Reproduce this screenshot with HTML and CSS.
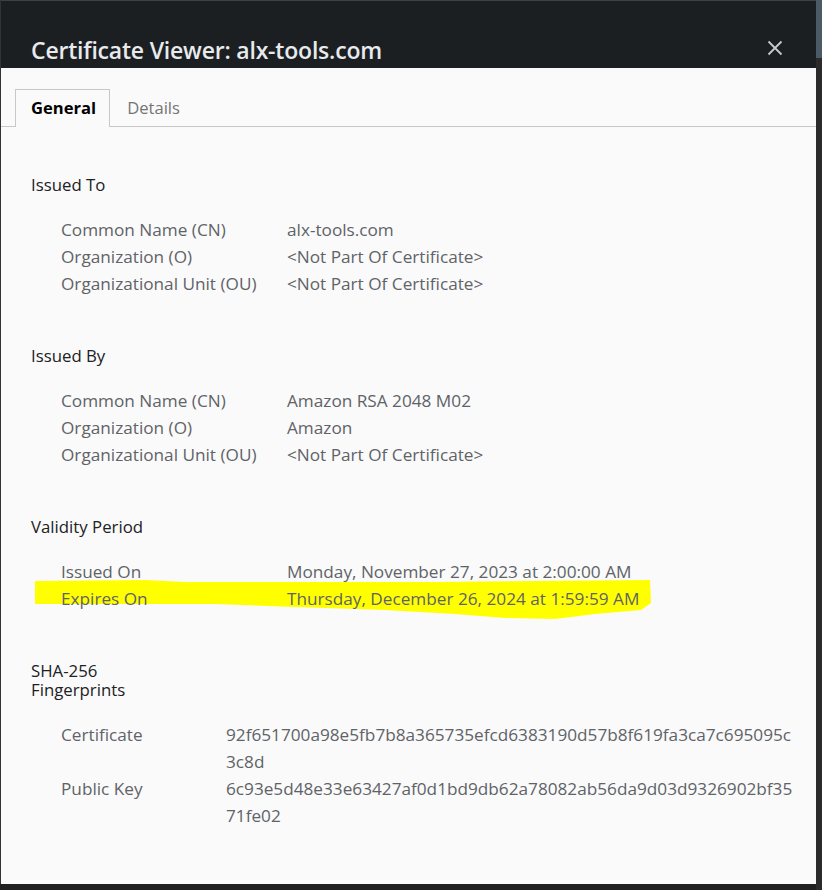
FILE: index.html
```html
<!DOCTYPE html>
<html lang="en">
<head>
<meta charset="utf-8">
<title>Certificate Viewer: alx-tools.com</title>
<link rel="stylesheet" href="styles.css">
</head>
<body>
<div class="dialog">
  <header class="titlebar">
    <h1 class="title">Certificate Viewer: alx-tools.com</h1>
    <button class="close" aria-label="Close">
      <svg width="16" height="16" viewBox="0 0 16 16"><path d="M1.5 1.5 L14.5 14.5 M14.5 1.5 L1.5 14.5" stroke="#c8cbce" stroke-width="1.8" fill="none"/></svg>
    </button>
  </header>
  <div class="content">
    <nav class="tabs">
      <div class="tab active">General</div>
      <div class="tab">Details</div>
    </nav>
    <section class="section">
      <h2 class="heading">Issued To</h2>
      <div class="rows">
        <div class="label">Common Name (CN)</div><div class="value">alx-tools.com</div>
        <div class="label">Organization (O)</div><div class="value">&lt;Not Part Of Certificate&gt;</div>
        <div class="label">Organizational Unit (OU)</div><div class="value">&lt;Not Part Of Certificate&gt;</div>
      </div>
    </section>
    <section class="section">
      <h2 class="heading">Issued By</h2>
      <div class="rows">
        <div class="label">Common Name (CN)</div><div class="value">Amazon RSA 2048 M02</div>
        <div class="label">Organization (O)</div><div class="value">Amazon</div>
        <div class="label">Organizational Unit (OU)</div><div class="value">&lt;Not Part Of Certificate&gt;</div>
      </div>
    </section>
    <section class="section validity">
      <h2 class="heading">Validity Period</h2>
      <div class="rows">
        <svg class="highlight" width="630" height="46" viewBox="0 0 630 46" aria-hidden="true"><path d="M0 4 L110 3 L150 5 L400 5 L615 3 L616 26 L606 33 L560 37 L520 42 L470 41 L420 37 L350 33 L260 30 L180 27 L110 27 L0 27 Z" fill="#ffff00"/></svg>
        <div class="label">Issued On</div><div class="value">Monday, November 27, 2023 at 2:00:00 AM</div>
        <div class="label">Expires On</div><div class="value">Thursday, December 26, 2024 at 1:59:59 AM</div>
      </div>
    </section>
    <section class="section">
      <h2 class="heading">SHA-256 Fingerprints</h2>
      <div class="rows fp">
        <div class="label">Certificate</div><div class="value hash">92f651700a98e5fb7b8a365735efcd6383190d57b8f619fa3ca7c695095c3c8d</div>
        <div class="label">Public Key</div><div class="value hash">6c93e5d48e33e63427af0d1bd9db62a78082ab56da9d03d9326902bf3571fe02</div>
      </div>
    </section>
  </div>
</div>
</body>
</html>
```
FILE: styles.css
```css
html, body {
  margin: 0;
  padding: 0;
}
body {
  width: 822px;
  height: 890px;
  overflow: hidden;
  background: linear-gradient(to bottom, #4b5b65 0, #4b5b65 58px, #2b2b2b 58px, #2b2b2b 100%);
  font-family: "Open Sans", "Noto Sans", sans-serif;
}
.dialog {
  width: 816px;
  height: 884px;
  display: flex;
  flex-direction: column;
  border-left: 1px solid #2e3538;
  box-sizing: border-box;
  background: #fafafa;
  box-shadow: 0 6px 0 #202020;
}
.titlebar {
  height: 68px;
  flex: none;
  background: #1b1f22;
  border-top: 1px solid #3a4247;
  box-sizing: border-box;
  display: flex;
  align-items: flex-end;
  justify-content: space-between;
  padding: 0 33px 3px 30px;
}
.title {
  margin: 0;
  font-size: 23px;
  font-weight: 600;
  color: #e8eaed;
  letter-spacing: -0.2px;
  line-height: 30px;
}
.close {
  background: none;
  border: 0;
  padding: 0;
  width: 16px;
  height: 16px;
  margin-bottom: 9px;
  display: flex;
}
.content {
  flex: 1;
  padding-top: 21px;
}
.tabs {
  display: flex;
  border-bottom: 1px solid #c8c8c8;
  padding-left: 14px;
  height: 37px;
}
.tab {
  padding: 0 16px;
  font-size: 16.6px;
  line-height: 36px;
  color: #757575;
  border: 1px solid transparent;
  border-bottom: 0;
  height: 37px;
  box-sizing: border-box;
  margin-bottom: -1px;
}
.tab.active {
  color: #000;
  font-weight: 700;
  border-color: #c8c8c8;
  background: #fafafa;
  height: 38px;
  padding: 0 13px 0 15px;
}
.section {
  padding: 48px 30px 0 30px;
}
.section + .section {
  padding-top: 49px;
}
.heading {
  margin: 0;
  font-size: 16.8px;
  font-weight: 400;
  line-height: 19px;
  color: #202124;
  max-width: 130px;
}
.rows {
  position: relative;
  display: grid;
  grid-template-columns: 226px auto;
  padding: 22px 0 0 30px;
  font-size: 17.2px;
  line-height: 27px;
  color: #5f6368;
}
.rows.fp {
  grid-template-columns: 165px 568px;
}
.label, .value {
  position: relative;
}
.hash {
  word-break: break-all;
}
.highlight {
  position: absolute;
  left: 4px;
  top: 41px;
}
```
